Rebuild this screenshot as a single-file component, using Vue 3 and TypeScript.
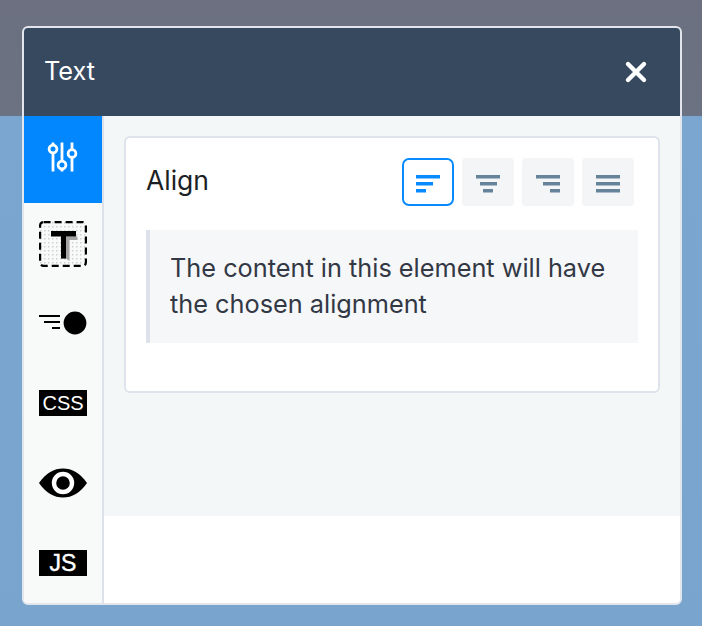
<script setup lang="ts">
const aligns = [
  { name: "left", bars: [[0, 24], [0, 17], [0, 10]] },
  { name: "center", bars: [[0, 24], [4, 17], [7, 10]] },
  { name: "right", bars: [[0, 24], [7, 17], [14, 10]] },
  { name: "justify", bars: [[0, 24], [0, 24], [0, 24]] },
];
</script>

<template>
  <div class="stage">
    <section class="panel">
      <header class="panel__head">
        <span class="panel__title">Text</span>
        <svg class="panel__close" width="24" height="24" viewBox="0 0 24 24">
          <path d="M4 4 20 20M20 4 4 20" stroke="#fff" stroke-width="4.4" stroke-linecap="round" />
        </svg>
      </header>
      <div class="panel__body">
        <nav class="tabs">
          <div class="tab tab--active">
            <svg width="32" height="30" viewBox="0 0 32 30" fill="none" stroke="#fff" stroke-width="2.8">
              <path d="M7 0.500v3M7 11v18.500M16 0.500v18M16 27v2.500M26 0.500v7M26 16v13.500" />
              <circle cx="7" cy="7" r="3.900" />
              <circle cx="16" cy="23" r="3.900" />
              <circle cx="26" cy="11.500" r="3.900" />
            </svg>
          </div>
          <div class="tab tab--plain">
            <svg width="48" height="46" viewBox="0 0 48 46">
              <defs>
                <pattern id="dots" width="4" height="4" patternUnits="userSpaceOnUse">
                  <rect x="1" y="1" width="1.500" height="1.500" fill="#d0d0d0" />
                </pattern>
              </defs>
              <rect x="1.100" y="1.100" width="45.800" height="43.800" rx="3.500" fill="url(#dots)" stroke="#000" stroke-width="2.200" stroke-dasharray="7 4" />
              <path d="M37 15.500h1.500v3.500h-8v21l-3.500-2.500h-5v-22z" fill="#a4a4a4" />
              <path d="M12 10h25v5.500h-10v22h-5v-22h-10z" fill="#000" />
            </svg>
          </div>
          <div class="tab">
            <svg width="48" height="24" viewBox="0 0 48 24">
              <path d="M0 5h21M5 11h16M13 17h8" stroke="#000" stroke-width="2" />
              <circle cx="36" cy="12" r="11.400" fill="#000" />
            </svg>
          </div>
          <div class="tab">
            <div class="code-chip">CSS</div>
          </div>
          <div class="tab">
            <svg width="48" height="30" viewBox="0 0 48 30">
              <path d="M0 15C7 5 15 0.500 24 0.500S41 5 48 15C41 25 33 29.500 24 29.500S7 25 0 15Z" fill="#000" />
              <circle cx="24" cy="15" r="9" fill="none" stroke="#fff" stroke-width="4.400" />
            </svg>
          </div>
          <div class="tab">
            <div class="code-chip code-chip--js">JS</div>
          </div>
        </nav>
        <main class="content">
          <div class="content__tint">
            <div class="card">
              <div class="card__row">
                <span class="card__label">Align</span>
                <div class="aligns">
                  <button
                    v-for="(a, i) in aligns"
                    :key="a.name"
                    class="align-btn"
                    :class="{ 'align-btn--on': i === 0 }"
                  >
                    <svg width="24" height="18" viewBox="0 0 24 18">
                      <rect
                        v-for="(b, j) in a.bars"
                        :key="j"
                        :x="b[0]"
                        :y="j * 7"
                        :width="b[1]"
                        height="3.500"
                      />
                    </svg>
                  </button>
                </div>
              </div>
              <p class="note">The content in this element will have the chosen alignment</p>
            </div>
          </div>
        </main>
      </div>
    </section>
  </div>
</template>

<style>
html,
body {
  margin: 0;
  background: #7aa5cf;
}
</style>

<style scoped>
.stage {
  width: 702px;
  height: 626px;
  box-sizing: border-box;
  padding: 26px 20px 21px 22px;
  background: linear-gradient(#6c7080 0, #6b7282 116px, #7ba6d0 116px, #79a4ce 100%);
  font-family: Inter, "Noto Sans", sans-serif;
}

.panel {
  height: 579px;
  box-sizing: border-box;
  border: 2px solid #e2e6ec;
  border-radius: 6px;
  overflow: hidden;
  display: flex;
  flex-direction: column;
  background: #fff;
}

.panel__head {
  height: 88px;
  flex: none;
  background: #37495f;
  display: flex;
  align-items: center;
  justify-content: space-between;
  padding: 0 32px 0 20px;
}

.panel__title {
  color: #fff;
  font-size: 25.300px;
  margin-top: -4px;
}

.panel__close {
  display: block;
}

.panel__body {
  flex: 1;
  display: flex;
  min-height: 0;
}

.tabs {
  width: 80px;
  flex: none;
  box-sizing: border-box;
  border-right: 2px solid #dde2ea;
  background: #f8f9f9;
  display: flex;
  flex-direction: column;
}

.tab {
  flex: none;
  height: 80px;
  box-sizing: border-box;
  padding-bottom: 2px;
  display: flex;
  align-items: center;
  justify-content: center;
}

.tab--active {
  height: 87px;
  margin-bottom: 1px;
  padding: 0 2px 6px 0;
  background: #0287ff;
}

.tab--plain {
  padding-bottom: 0;
}

.code-chip {
  width: 48px;
  height: 26px;
  background: #000;
  color: #fff;
  font-family: "Liberation Sans", Arial, sans-serif;
  font-size: 20px;
  line-height: 26px;
  text-align: center;
}

.code-chip--js {
  font-size: 23px;
  -webkit-text-stroke: 0.4px #fff;
}

.content {
  flex: 1;
  min-width: 0;
}

.content__tint {
  height: 400px;
  box-sizing: border-box;
  padding: 20px 20px 0;
  background: #f4f7f8;
}

.card {
  height: 257px;
  box-sizing: border-box;
  border: 2px solid #dfe4ec;
  border-radius: 6px;
  background: #fff;
  padding: 20px 20px 0;
}

.card__row {
  display: flex;
  align-items: center;
  justify-content: space-between;
  padding-right: 4px;
}

.card__label {
  font-size: 26.500px;
  color: #1c1f24;
  margin-top: -4px;
}

.aligns {
  display: flex;
  gap: 8px;
}

.align-btn {
  width: 52px;
  height: 48px;
  box-sizing: border-box;
  padding: 3px 0 0;
  border: 0;
  border-radius: 4px;
  background: #f4f5f7;
  fill: #668499;
  display: flex;
  align-items: center;
  justify-content: center;
}

.align-btn--on {
  border: 2px solid #0a8aff;
  border-radius: 7px;
  background: #fff;
  fill: #0a8aff;
}

.note {
  margin: 24px 0 0;
  height: 113px;
  box-sizing: border-box;
  border-left: 4px solid #dde2ea;
  background: #f6f7f9;
  padding: 20px 20px 0;
  color: #333845;
  font-size: 25.300px;
  line-height: 36px;
}
</style>
